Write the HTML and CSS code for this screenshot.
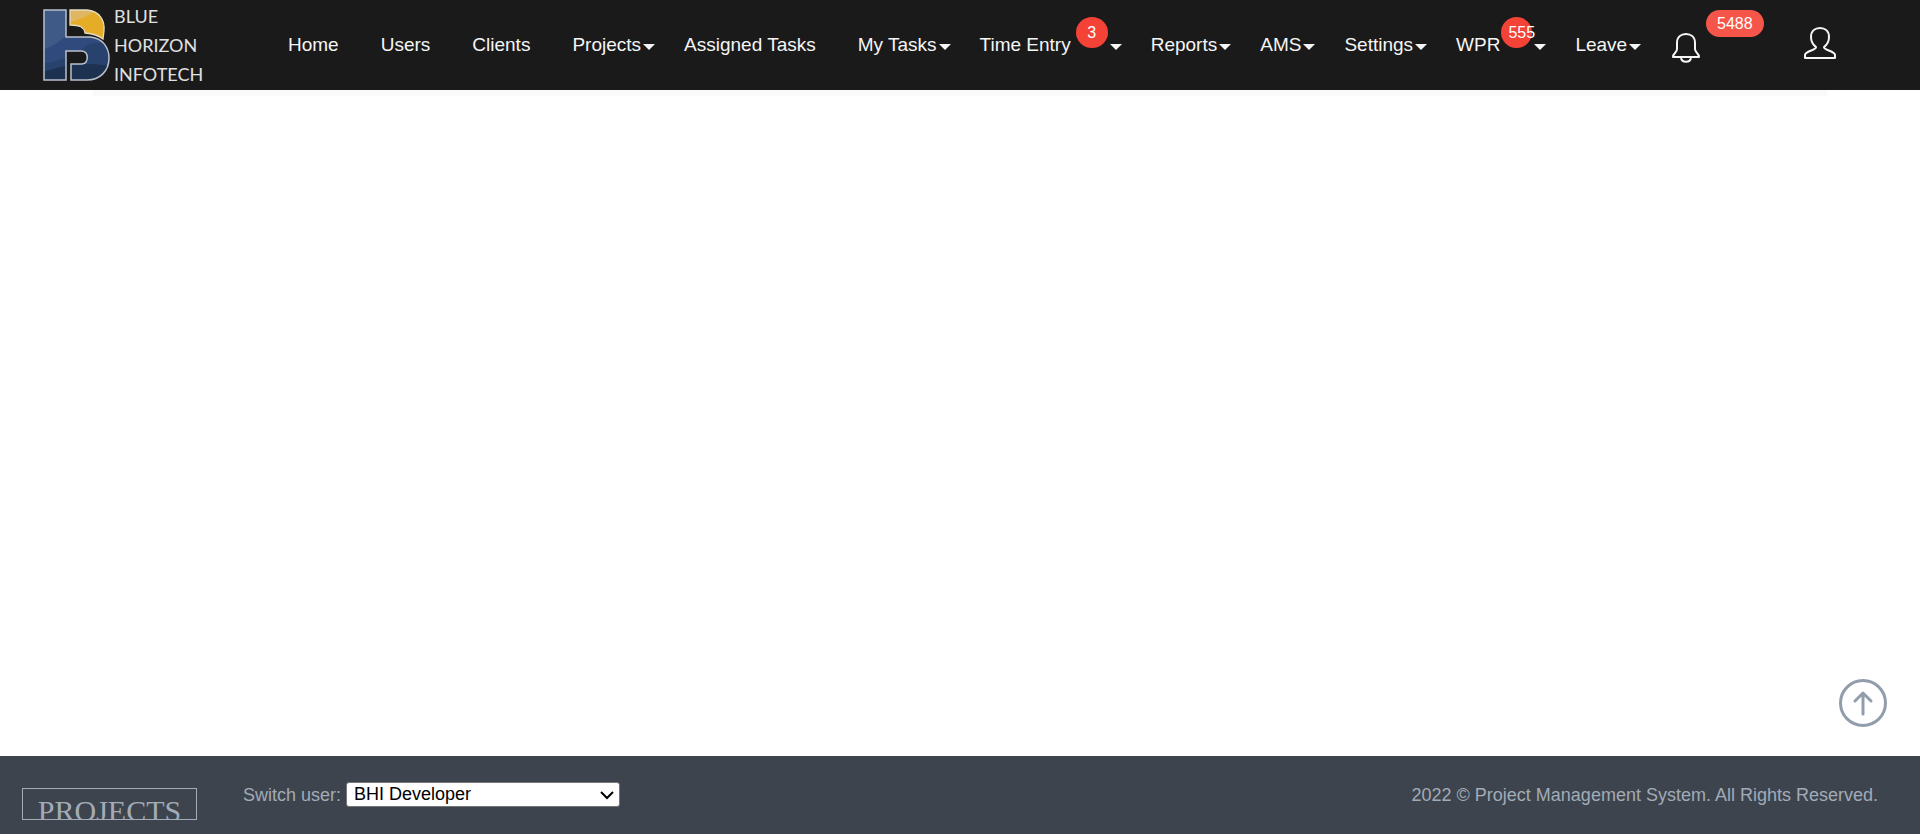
FILE: index.html
```html
<!DOCTYPE html>
<html lang="en">
<head>
<meta charset="utf-8">
<meta name="viewport" content="width=device-width, initial-scale=1">
<title>Project Management System</title>
<link rel="stylesheet" href="styles.css">
</head>
<body>
<header class="header">
  <a class="logo" href="#" aria-label="Blue Horizon Infotech">
    <svg class="logo-mark" viewBox="0 0 68 74" aria-hidden="true">
      <defs>
        <clipPath id="shape"><path d="M1 2H23V29H47C60 30 66 40 66 50C66 63 57 72 44 72H28V56H39C46 55 46 44 39 43H23V72H1Z"/></clipPath>
        <clipPath id="wedge"><path d="M27 2H44C57 3 62 13 61 23L60 31Q54 26 42 25C41 19 37 17 27 17Z"/></clipPath>
      </defs>
      <g clip-path="url(#shape)">
        <rect width="68" height="74" fill="#3f5a86"/>
        <path d="M0 42Q16 36 24 26H68V74H0Z" fill="#304a7d"/>
        <path d="M0 56Q26 52 46 36L68 34V74H0Z" fill="#27426c"/>
        <path d="M0 64Q34 52 68 58V74H0Z" fill="#1d3250"/>
      </g>
      <g clip-path="url(#wedge)">
        <rect width="68" height="40" fill="#e5ac28"/>
        <path d="M26 0H58Q46 8 26 15Z" fill="#dfb663"/>
      </g>
      <path d="M1 2H23V29H47C60 30 66 40 66 50C66 63 57 72 44 72H28V56H39C46 55 46 44 39 43H23V72H1Z" fill="none" stroke="#b9c0cb" stroke-width="1.5"/>
      <path d="M27 2H44C57 3 62 13 61 23L60 31Q54 26 42 25C41 19 37 17 27 17Z" fill="none" stroke="#e6dcc0" stroke-width="1.3"/>
    </svg>
    <span class="logo-text"><span>BLUE</span><span>HORIZON</span><span>INFOTECH</span></span>
  </a>
  <nav class="nav" aria-label="Main">
    <a class="item" href="#">Home</a>
    <a class="item" href="#">Users</a>
    <a class="item" href="#">Clients</a>
    <a class="item drop" href="#">Projects</a>
    <a class="item" href="#">Assigned Tasks</a>
    <a class="item drop" href="#">My Tasks</a>
    <a class="item drop" href="#">Time Entry<span class="badge spaced">3</span></a>
    <a class="item drop" href="#">Reports</a>
    <a class="item drop" href="#">AMS</a>
    <a class="item drop" href="#">Settings</a>
    <a class="item drop" href="#">WPR<span class="badge">555</span></a>
    <a class="item drop" href="#">Leave</a>
  </nav>
  <div class="actions">
    <button class="icon-button bell" type="button" aria-label="Notifications">
      <svg width="28" height="32" viewBox="0 0 28 32" aria-hidden="true"><path d="M5 17V11C5 5 9 2 14 2S23 5 23 11V17C23 21 27 21 27 25H1C1 21 5 21 5 17ZM9 26C10 31 18 31 19 26"/></svg>
      <span class="count">5488</span>
    </button>
    <button class="icon-button user" type="button" aria-label="Account">
      <svg width="34" height="34" viewBox="0 0 34 34" aria-hidden="true"><path d="M13 21C9 18 8 14 8 11C8 5 12 2 17 2S26 5 26 11C26 14 25 18 21 21C20 24 32 25 32 29V32H2V29C2 25 14 24 13 21Z"/></svg>
    </button>
  </div>
</header>
<main class="content">
  <div class="panel"></div>
  <button class="to-top" type="button" aria-label="Scroll to top">
    <svg width="48" height="48" viewBox="0 0 48 48" aria-hidden="true"><circle cx="24" cy="24" r="22.5"/><path d="M24 35V14M16 22L24 14L32 22"/></svg>
  </button>
</main>
<footer class="footer">
  <a class="projects" href="#">PROJECTS</a>
  <div class="switch">
    <label for="user">Switch user:</label>
    <div class="select-wrap">
      <select id="user" class="select"><option>BHI Developer</option></select>
      <svg class="chevron" width="14" height="10" viewBox="0 0 14 10" aria-hidden="true"><path d="M1 2L7 8L13 2"/></svg>
    </div>
  </div>
  <p class="copyright">2022 © Project Management System. All Rights Reserved.</p>
</footer>
</body>
</html>
```
FILE: styles.css
```css
* { box-sizing: border-box; }
body {
  margin: 0;
  min-height: 100vh;
  display: flex;
  flex-direction: column;
  background: #fff;
  font-family: "Liberation Sans", Arial, sans-serif;
  font-size: 18px;
}
a { color: inherit; text-decoration: none; }
button { border: 0; padding: 0; background: none; font: inherit; cursor: pointer; }

.header {
  display: flex;
  align-items: center;
  height: 90px;
  padding: 0 83px 0 43px;
  background: #1a1a1a;
  color: #f5f5f5;
  font-size: 19px;
}
.logo { display: flex; align-items: center; gap: 3px; width: 245px; }
.logo-mark { width: 68px; height: 74px; }
.logo-text {
  display: flex;
  flex-direction: column;
  color: #e0e0e0;
  font-family: Lato, sans-serif;
  font-size: 18px;
  line-height: 29px;
}
.nav { display: flex; align-items: center; gap: 42px; }
.item { display: flex; align-items: center; white-space: nowrap; line-height: 28px; }
.drop::after {
  content: "";
  margin: 4px 0 0 2px;
  border: 6px solid transparent;
  border-top-color: #f5f5f5;
  border-bottom: 0;
}
.drop + .item { margin-left: -13px; }
.badge {
  align-self: flex-start;
  width: 31px;
  height: 31px;
  padding: 0 7px;
  margin: -14px 0 -3px 1px;
  border-radius: 50%;
  background: #f44336;
  color: #fff;
  font-size: 16px;
  line-height: 31px;
  text-align: center;
}
.spaced { width: 32px; margin-left: 5px; }
.actions { display: flex; align-items: center; gap: 103px; margin-left: auto; }
.icon-button { position: relative; display: flex; color: #fff; }
.icon-button path { fill: none; stroke: #f5f5f5; stroke-width: 2; stroke-linejoin: round; }
.bell { margin-top: 6px; }
.user { margin-bottom: 4px; }
.count {
  position: absolute;
  top: -22px;
  left: 34px;
  padding: 0 11px;
  border-radius: 14px;
  background: #f65549;
  font-size: 16px;
  line-height: 27px;
}
.content { position: relative; flex: 1; }
.panel { height: 6px; margin: 0 93px; background: #fafafa; }
.to-top { position: absolute; right: 33px; bottom: 29px; display: flex; }
.to-top svg { fill: none; stroke: #929dab; stroke-width: 3; stroke-linecap: round; stroke-linejoin: round; }

.footer {
  display: flex;
  align-items: flex-start;
  min-height: 78px;
  padding: 24px 42px 14px 22px;
  background: #3d444d;
  color: #a2abb7;
  line-height: 30px;
}
.projects {
  width: 175px;
  height: 32px;
  margin: 8px 46px 0 0;
  padding-top: 5px;
  border: 1px solid #a2abb7;
  overflow: hidden;
  font-family: "Liberation Serif", "Times New Roman", serif;
  font-size: 30px;
  line-height: 34px;
  text-align: center;
}
.switch { display: flex; align-items: center; gap: 5px; }
.select-wrap { position: relative; display: flex; margin-bottom: 2px; }
.select {
  appearance: none;
  width: 274px;
  height: 25px;
  padding: 0 30px 0 7px;
  border: 1px solid #767676;
  border-radius: 3px;
  background: #fff;
  color: #000;
  font: inherit;
  line-height: 23px;
}
.chevron {
  position: absolute;
  right: 6px;
  top: 8px;
  fill: none;
  stroke: #000;
  stroke-width: 2;
  pointer-events: none;
}
.copyright { margin: 0 0 0 auto; }
```
